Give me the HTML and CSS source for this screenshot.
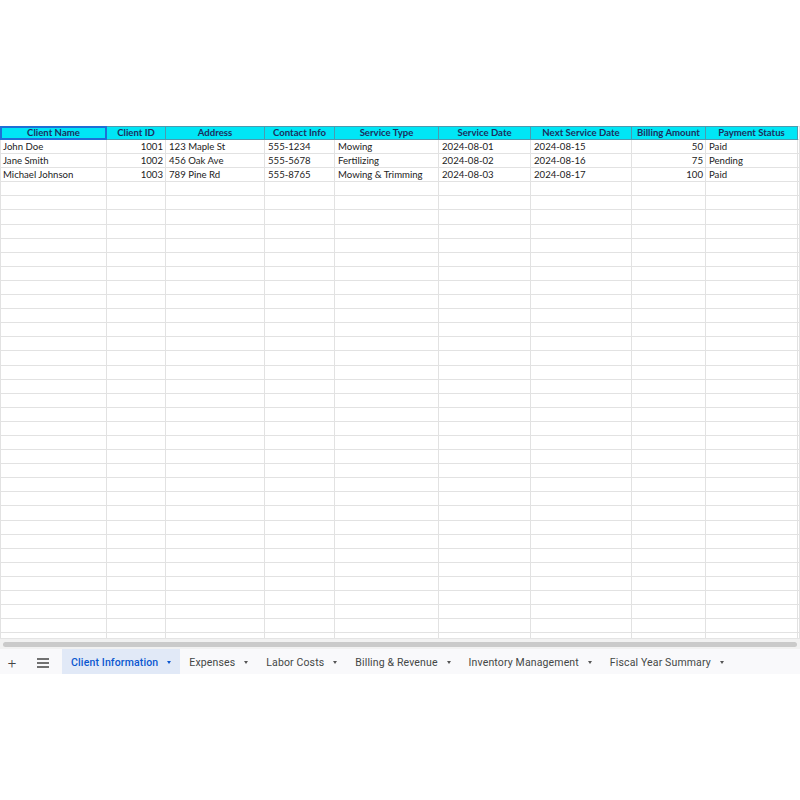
FILE: index.html
```html
<!DOCTYPE html>
<html lang="en">
<head>
    <meta charset="UTF-8">
    <meta name="viewport" content="width=device-width, initial-scale=1.0">
    <title>Client Information</title>
    <link rel="stylesheet" href="styles.css">
</head>
<body>
    <div class="workbook">
        <div class="grid-area">
            <table class="sheet">
                <colgroup>
                    <col style="width:106px">
                    <col style="width:59px">
                    <col style="width:99px">
                    <col style="width:70px">
                    <col style="width:104px">
                    <col style="width:92px">
                    <col style="width:101px">
                    <col style="width:74px">
                    <col style="width:92px">
                    <col>
                </colgroup>
                <thead>
                    <tr>
                        <th class="active">Client Name</th>
                        <th>Client ID</th>
                        <th>Address</th>
                        <th>Contact Info</th>
                        <th>Service Type</th>
                        <th>Service Date</th>
                        <th>Next Service Date</th>
                        <th>Billing Amount</th>
                        <th>Payment Status</th>
                        <th class="blank"></th>
                    </tr>
                </thead>
                <tbody id="rows">
                    <tr>
                        <td>John Doe</td>
                        <td class="num">1001</td>
                        <td>123 Maple St</td>
                        <td>555-1234</td>
                        <td>Mowing</td>
                        <td>2024-08-01</td>
                        <td>2024-08-15</td>
                        <td class="num">50</td>
                        <td>Paid</td>
                        <td></td>
                    </tr>
                    <tr>
                        <td>Jane Smith</td>
                        <td class="num">1002</td>
                        <td>456 Oak Ave</td>
                        <td>555-5678</td>
                        <td>Fertilizing</td>
                        <td>2024-08-02</td>
                        <td>2024-08-16</td>
                        <td class="num">75</td>
                        <td>Pending</td>
                        <td></td>
                    </tr>
                    <tr>
                        <td>Michael Johnson</td>
                        <td class="num">1003</td>
                        <td>789 Pine Rd</td>
                        <td>555-8765</td>
                        <td>Mowing &amp; Trimming</td>
                        <td>2024-08-03</td>
                        <td>2024-08-17</td>
                        <td class="num">100</td>
                        <td>Paid</td>
                        <td></td>
                    </tr>
                </tbody>
            </table>
        </div>

        <div class="hscroll"><div class="thumb"></div></div>

        <div class="tabbar">
            <span class="tool plus">+</span>
            <span class="tool menu">
                <svg width="12" height="10" viewBox="0 0 12 10"><path d="M0 1h12M0 5h12M0 9h12" stroke="#444" stroke-width="1.3"/></svg>
            </span>
            <div class="tab selected">Client Information<span class="caret"></span></div>
            <div class="tab">Expenses<span class="caret"></span></div>
            <div class="tab">Labor Costs<span class="caret"></span></div>
            <div class="tab">Billing &amp; Revenue<span class="caret"></span></div>
            <div class="tab">Inventory Management<span class="caret"></span></div>
            <div class="tab">Fiscal Year Summary<span class="caret"></span></div>
        </div>
    </div>

    <script>
        // fill the rest of the sheet with empty rows
        const body = document.getElementById('rows');
        for (let i = 0; i < 33; i++) {
            const tr = document.createElement('tr');
            for (let c = 0; c < 10; c++) {
                tr.appendChild(document.createElement('td'));
            }
            body.appendChild(tr);
        }
    </script>
</body>
</html>
```

FILE: styles.css
```css
body {
    margin: 0;
    background-color: #ffffff;
    font-family: 'Lato', 'Liberation Sans', sans-serif;
}
.workbook {
    padding-top: 126px;
}
.grid-area {
    height: 512px;
    overflow: hidden;
}
.sheet {
    width: 800px;
    table-layout: fixed;
    border-collapse: collapse;
    font-size: 9.6px;
    color: #222222;
}
.sheet th {
    height: 12px;
    padding: 0 2px;
    line-height: 12px;
    background-color: #00e6f6;
    color: #1c2f5e;
    font-weight: 700;
    font-size: 9.6px;
    text-align: center;
    border: 1px solid #4a9bb0;
    white-space: nowrap;
    overflow: hidden;
}
.sheet th.active {
    box-shadow: inset 0 0 0 1px #1f6fd6;
    border-color: #1f6fd6;
}
.sheet th.blank {
    background-color: #ffffff;
    border-color: #e2e2e2;
}
.sheet td {
    height: 13.1px;
    padding: 0 2px 0 3px;
    line-height: 12px;
    border: 1px solid #e2e2e2;
    white-space: nowrap;
    overflow: hidden;
}
.sheet td:first-child {
    padding-left: 2px;
}
.sheet td.num {
    text-align: right;
}
.hscroll {
    height: 10px;
    background-color: #f1f1f1;
    border-top: 1px solid #e4e4e4;
    display: flex;
    align-items: center;
    padding: 0 3px;
}
.thumb {
    flex: 1;
    height: 5px;
    background-color: #cacaca;
    border-radius: 3px;
}
.tabbar {
    height: 25px;
    background-color: #f9f9fb;
    display: flex;
    align-items: stretch;
    font-family: 'Roboto', 'Liberation Sans', sans-serif;
    font-size: 10.5px;
    letter-spacing: 0.14px;
    color: #444746;
}
.tool {
    display: flex;
    align-items: center;
    justify-content: center;
    padding-top: 2px;
}
.plus {
    width: 24px;
    font-size: 15px;
    font-weight: 300;
    color: #444;
}
.menu {
    width: 38px;
}
.tab {
    display: flex;
    align-items: center;
    padding: 2px 9px 0;
    white-space: nowrap;
}
.tab.selected {
    background-color: #e1e9f7;
    color: #0b57d0;
    font-weight: 500;
}
.caret {
    display: inline-block;
    margin-left: 9px;
    border-left: 2.5px solid transparent;
    border-right: 2.5px solid transparent;
    border-top: 3px solid #555;
}
.tab.selected .caret {
    border-top-color: #0b57d0;
}
```
